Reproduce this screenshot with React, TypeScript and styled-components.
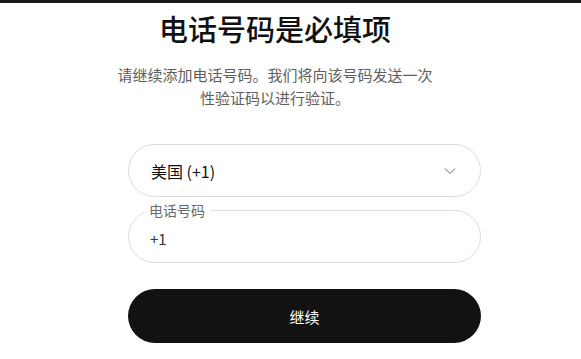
import React from "react";
import styled, { createGlobalStyle } from "styled-components";

const GlobalStyle = createGlobalStyle`
  body {
    margin: 0;
    background: #ffffff;
    font-family: "Noto Sans CJK SC", "Noto Sans", "Liberation Sans", sans-serif;
  }
`;

const Page = styled.div`
  width: 581px;
  height: 359px;
  overflow: hidden;
  border-top: 3px solid #16181a;
  box-sizing: border-box;
  display: flex;
  flex-direction: column;
`;

const Header = styled.header`
  width: 550px;
  display: flex;
  flex-direction: column;
  align-items: center;
  padding-top: 7px;
`;

const Title = styled.h1`
  margin: 0;
  font-size: 29px;
  line-height: 36px;
  font-weight: 500;
  color: #111111;
`;

const Subtitle = styled.p`
  margin: 17px 0 0;
  width: 320px;
  text-align: center;
  font-size: 15px;
  line-height: 23px;
  color: #5e5e5e;
`;

const Form = styled.form`
  margin: 35px 0 0 128px;
  width: 353px;
  display: flex;
  flex-direction: column;
`;

const Select = styled.div`
  height: 53px;
  box-sizing: border-box;
  border: 1px solid #dcdcdc;
  border-radius: 999px;
  display: flex;
  align-items: center;
  justify-content: space-between;
  padding: 0 24px 0 22px;
  font-size: 16px;
  color: #111111;
`;

const Field = styled.div`
  position: relative;
  margin-top: 13px;
  height: 53px;
  box-sizing: border-box;
  border: 1px solid #dcdcdc;
  border-radius: 999px;
  display: flex;
  align-items: center;
  padding: 4px 0 0 21px;
  font-size: 15px;
  color: #333333;
`;

const FieldLabel = styled.span`
  position: absolute;
  top: -10px;
  left: 16px;
  padding: 0 5px 0 4px;
  background: #ffffff;
  font-size: 14px;
  line-height: 18px;
  color: #6a6a6a;
`;

const Button = styled.button`
  margin-top: 26px;
  height: 54px;
  border: none;
  border-radius: 999px;
  background: #121212;
  color: #ffffff;
  font-family: inherit;
  font-size: 15px;
  cursor: pointer;
`;

function Chevron(): JSX.Element {
  return (
    <svg width="12" height="6" viewBox="0 0 12 6" fill="none">
      <path d="M1 0.8l5 4.4 5-4.4" stroke="#a8a8a8" strokeWidth="1.2" strokeLinecap="round" strokeLinejoin="round" />
    </svg>
  );
}

export default function App(): JSX.Element {
  return (
    <Page>
      <GlobalStyle />
      <Header>
        <Title>电话号码是必填项</Title>
        <Subtitle>请继续添加电话号码。我们将向该号码发送一次性验证码以进行验证。</Subtitle>
      </Header>
      <Form onSubmit={(e) => e.preventDefault()}>
        <Select>
          <span>美国 (+1)</span>
          <Chevron />
        </Select>
        <Field>
          <FieldLabel>电话号码</FieldLabel>
          +1
        </Field>
        <Button type="submit">继续</Button>
      </Form>
    </Page>
  );
}
